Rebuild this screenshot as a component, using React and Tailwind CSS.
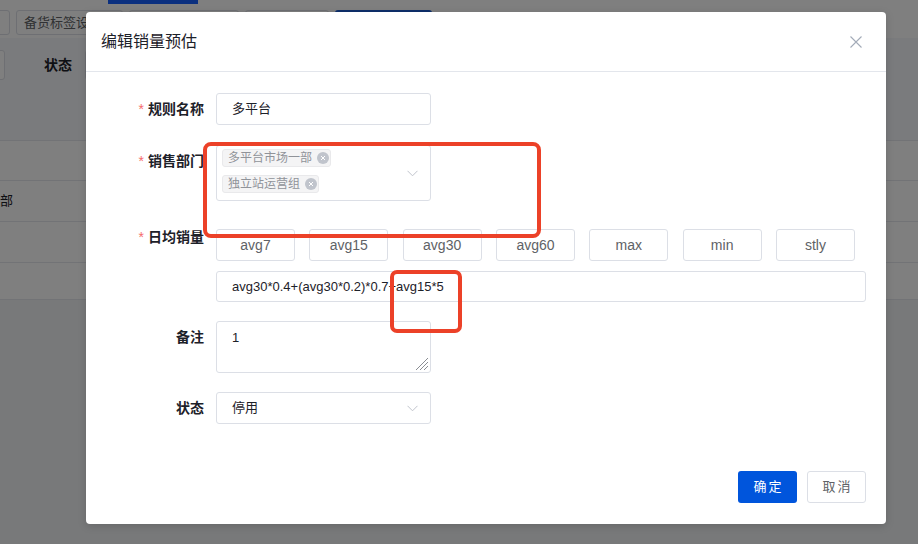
import React from "react";

function Chevron() {
  return (
    <svg width="11" height="7" viewBox="0 0 11 7" className="shrink-0">
      <path d="M0.5 0.8 L5.5 5.8 L10.5 0.8" fill="none" stroke="#c0c4cc" strokeWidth="1" />
    </svg>
  );
}

function Tag({ text }) {
  return (
    <div className="flex items-center h-[18px] pl-[5px] pr-[1px] gap-[5px] bg-[#f4f4f5] border border-[#e9e9eb] rounded-[3px] text-[12px] text-[#909399] leading-none self-start">
      <span>{text}</span>
      <span className="w-[12px] h-[12px] rounded-full bg-[#c0c4cc] flex items-center justify-center">
        <svg width="6" height="6" viewBox="0 0 6 6">
          <path d="M1 1 L5 5 M5 1 L1 5" stroke="#ffffff" strokeWidth="1" />
        </svg>
      </span>
    </div>
  );
}

function Label({ text, required }) {
  return (
    <div className="w-[130px] shrink-0 pr-[12px] h-[32px] leading-[32px] text-right text-[14px] font-bold text-[#1d2129]">
      {required && <span className="text-[#f56c6c] font-normal mr-[4px]">*</span>}
      {text}
    </div>
  );
}

const opts = ["avg7", "avg15", "avg30", "avg60", "max", "min", "stly"];

export default function App() {
  return (
    <div className="relative w-[918px] h-[544px] overflow-hidden bg-[#f0f2f5] font-['Liberation_Sans','Noto_Sans_CJK_SC',sans-serif]">
      {/* background page */}
      <div className="bg-white">
        <div className="h-[5px] flex">
          <div className="ml-[108px] w-[90px] h-[4px] bg-[#1660ff]" />
        </div>
        <div className="h-[33px] flex items-start pt-[5px] gap-[6px] ml-[-10px]">
          <div className="w-[20px] h-[25px] border border-[#dcdfe6] rounded-[3px]" />
          <div className="w-[107px] h-[25px] border border-[#dcdfe6] rounded-[3px] text-[13px] text-[#606266] pl-[7px] leading-[23px] overflow-hidden whitespace-nowrap">备货标签设置</div>
          <div className="w-[110px] h-[25px] border border-[#dcdfe6] rounded-[3px]" />
          <div className="w-[84px] h-[25px] border border-[#dcdfe6] rounded-[3px]" />
          <div className="w-[97px] h-[25px] bg-[#1d5fd6] rounded-[3px]" />
        </div>
      </div>
      <div className="h-[102px] bg-[#f5f7fa] flex items-start pt-[12px]">
        <div className="ml-[-30px] w-[35px] h-[30px] border border-[#dcdfe6] rounded-[3px] bg-white" />
        <div className="ml-[39px] h-[30px] leading-[30px] text-[14px] font-bold text-[#1d2129]">状态</div>
        <div className="ml-[13px] w-[150px] h-[30px] border border-[#dcdfe6] rounded-[3px] bg-white" />
      </div>
      <div className="bg-white">
        <div className="h-[40px] border-t border-[#e4e7ed]" />
        <div className="h-[41px] border-t border-[#e4e7ed] flex items-center text-[13px] text-[#1d2129]">部</div>
        <div className="h-[41px] border-t border-[#e4e7ed]" />
        <div className="h-[38px] border-t border-b border-[#e4e7ed]" />
      </div>

      {/* overlay */}
      <div className="absolute inset-0 bg-black/50" />

      {/* modal */}
      <div className="absolute left-[86px] top-[12px] w-[800px] h-[512px] bg-white rounded-[4px] flex flex-col shadow-[0_2px_8px_rgba(0,0,0,0.15)]">
        <div className="h-[60px] shrink-0 border-b border-[#e3e6ec] flex items-center justify-between pl-[15px] pr-[24px]">
          <span className="text-[16px] text-[#1d2129]">编辑销量预估</span>
          <svg width="12" height="12" viewBox="0 0 12 12">
            <path d="M0.5 0.5 L11.5 11.5 M11.5 0.5 L0.5 11.5" stroke="#a3abb8" strokeWidth="1.1" />
          </svg>
        </div>

        <div className="flex-1 pt-[21px]">
          <div className="flex mb-[20px]">
            <Label text="规则名称" required />
            <div className="w-[215px] h-[32px] border border-[#dcdfe6] rounded-[3px] px-[15px] flex items-center text-[13px] text-[#1d2129]">多平台</div>
          </div>

          <div className="flex mb-[20px]">
            <Label text="销售部门" required />
            <div className="w-[215px] h-[56px] border border-[#dcdfe6] rounded-[3px] pl-[5px] pr-[12px] pt-[3px] flex items-start justify-between">
              <div className="flex flex-col gap-[8px]">
                <Tag text="多平台市场一部" />
                <Tag text="独立站运营组" />
              </div>
              <div className="self-center mt-[-3px]">
                <Chevron />
              </div>
            </div>
          </div>

          <div className="flex mb-[19px]">
            <Label text="日均销量" required />
            <div className="pt-[8px]">
              <div className="w-[639px] flex justify-between">
                {opts.map((o) => (
                  <div key={o} className="w-[79px] h-[32px] border border-[#dcdfe6] rounded-[3px] flex items-center justify-center text-[14px] text-[#606266]">
                    {o}
                  </div>
                ))}
              </div>
              <div className="mt-[10px] w-[650px] h-[31px] border border-[#dcdfe6] rounded-[3px] px-[15px] flex items-center text-[13px] text-[#1d2129]">
                avg30*0.4+(avg30*0.2)*0.7+avg15*5
              </div>
            </div>
          </div>

          <div className="flex mb-[19px]">
            <Label text="备注" />
            <div className="relative w-[215px] h-[52px] border border-[#dcdfe6] rounded-[3px] px-[15px] pt-[6px] text-[13px] text-[#1d2129] leading-[20px]">
              1
              <svg width="14" height="14" viewBox="0 0 14 14" className="absolute right-[1px] bottom-[1px]">
                <path d="M13 1 L1 13 M13 5 L5 13 M13 9 L9 13" stroke="#8a8d93" strokeWidth="1" />
              </svg>
            </div>
          </div>

          <div className="flex">
            <Label text="状态" />
            <div className="w-[215px] h-[32px] border border-[#dcdfe6] rounded-[3px] pl-[15px] pr-[12px] flex items-center justify-between text-[13px] text-[#1d2129]">
              <span>停用</span>
              <Chevron />
            </div>
          </div>
        </div>

        <div className="flex justify-end gap-[10px] pr-[20px] pb-[21px]">
          <div className="w-[59px] h-[32px] rounded-[3px] bg-[#0055dc] text-white text-[13px] tracking-[2px] pl-[2px] flex items-center justify-center">确定</div>
          <div className="w-[59px] h-[32px] rounded-[3px] border border-[#dcdfe6] bg-white text-[#606266] text-[13px] tracking-[2px] pl-[2px] flex items-center justify-center">取消</div>
        </div>
      </div>

      {/* red annotation boxes */}
      <div className="absolute left-[203px] top-[142px] w-[338px] h-[96px] border-[4px] border-[#ec4128] rounded-[8px]" />
      <div className="absolute left-[390px] top-[270px] w-[72px] h-[63px] border-[4px] border-[#ec4128] rounded-[7px]" />
    </div>
  );
}
